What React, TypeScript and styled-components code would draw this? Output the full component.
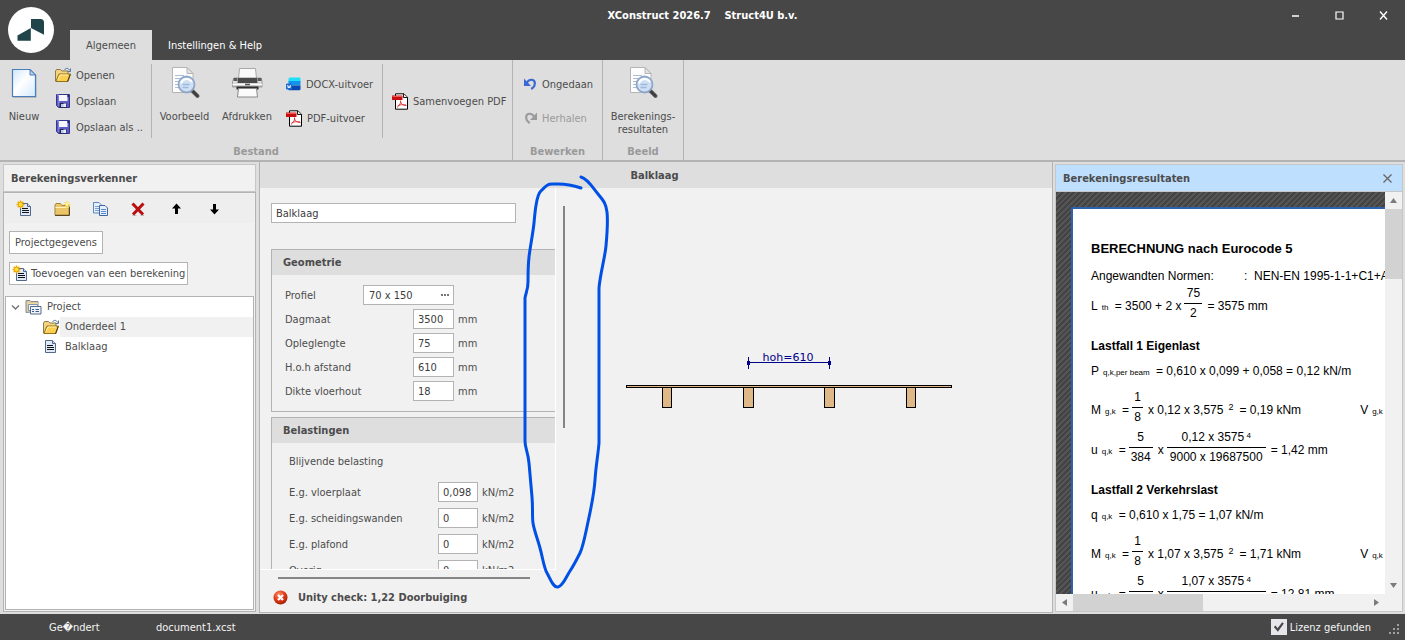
import React from 'react';
import styled, { createGlobalStyle, css } from 'styled-components';

const ui = '"DejaVu Sans Condensed", "DejaVu Sans", Tahoma, sans-serif';
const c = {
  dark: '#474747',
  ribbon: '#dedede',
  panel: '#f1f1f1',
  line: '#b3b3b3',
  text: '#4c4c4c',
  muted: '#9a9a9a',
};

const GlobalStyle = createGlobalStyle`
  * { box-sizing: border-box; }
  body { margin: 0; background: ${c.ribbon}; font-family: ${ui}; font-size: 11px; color: ${c.text}; }
  button, input { font-family: inherit; font-size: inherit; color: inherit; }
  button { border: 0; background: none; padding: 0; cursor: pointer; }
  h1, h2, h3, p { margin: 0; font-size: inherit; }
  svg { display: block; flex: none; }
`;

/* ---------- window frame ---------- */

const Window = styled.div`
  position: relative;
  display: flex;
  flex-direction: column;
  height: 100vh;
  overflow: hidden;
`;

const TitleBar = styled.header`
  display: grid;
  grid-template-columns: 1fr auto 1fr;
  height: 60px;
  flex: none;
  background: ${c.dark};
  color: #fff;
`;

const TitleLeft = styled.div`
  display: flex;
  align-items: flex-end;
  padding-left: 8px;
`;

const Logo = styled.svg`
  margin: 0 16px 7px 0;
`;

const Tab = styled.button<{ $active?: boolean }>`
  height: 30px;
  padding: 0 16px;
  white-space: nowrap;
  color: ${p => (p.$active ? c.text : '#fff')};
  background: ${p => (p.$active ? c.ribbon : 'transparent')};
`;

const Caption = styled.h1`
  padding-top: 9px;
  line-height: 14px;
  white-space: pre;
`;

const WindowButtons = styled.div`
  display: flex;
  justify-content: flex-end;
  height: 30px;
`;

const WindowButton = styled.button`
  display: flex;
  align-items: center;
  justify-content: center;
  width: 44px;
`;

/* ---------- ribbon ---------- */

const Ribbon = styled.div`
  display: flex;
  flex: none;
  height: 102px;
  background: ${c.ribbon};
  border-bottom: 2px solid ${c.line};
`;

const Group = styled.section`
  display: flex;
  flex-direction: column;
  border-right: 1px solid ${c.line};
`;

const GroupBody = styled.div`
  display: flex;
  height: 83px;
`;

const GroupName = styled.h2`
  line-height: 17px;
  text-align: center;
  color: ${c.muted};
`;

const Divider = styled.div`
  width: 1px;
  margin: 4px 0 5px;
  background: ${c.line};
`;

const BigButton = styled.button<{ $w: number }>`
  display: flex;
  flex-direction: column;
  align-items: center;
  width: ${p => p.$w}px;
  padding-top: 6px;
  line-height: 13px;
  svg { margin-bottom: 12px; }
`;

const Stack = styled.div<{ $w: number; $row: number; $left: number; $top: number }>`
  display: flex;
  flex-direction: column;
  width: ${p => p.$w}px;
  padding: ${p => p.$top}px 0 0 ${p => p.$left}px;
  button { height: ${p => p.$row}px; }
`;

const SmallButton = styled.button`
  display: flex;
  align-items: center;
  gap: 4px;
  white-space: nowrap;
  &:disabled { color: ${c.muted}; }
`;

/* ---------- work area ---------- */

const Main = styled.main`
  display: grid;
  grid-template-columns: 257px minmax(0, 1fr) 350px;
  column-gap: 2px;
  flex: 1;
  min-height: 0;
  padding-bottom: 1px;
`;

const PanelTitle = styled.h2<{ $active?: boolean }>`
  display: flex;
  align-items: center;
  justify-content: space-between;
  flex: none;
  height: 28px;
  padding: 0 10px 0 7px;
  border: 1px solid #c6c6c6;
  background: ${p => (p.$active ? '#bfdfff' : c.panel)};
`;

const Explorer = styled.aside`
  display: flex;
  flex-direction: column;
  margin: 2px 1px 1px 3px;
`;

const ExplorerBody = styled.div`
  display: flex;
  flex-direction: column;
  align-items: flex-start;
  flex: 1;
  min-height: 0;
  padding: 1px;
  border: 1px solid ${c.line};
  background: ${c.panel};
`;

const Toolbar = styled.div`
  display: flex;
  align-items: center;
  width: 100%;
  height: 29px;
  background: #eee;
`;

const ToolButton = styled.button`
  display: flex;
  align-items: center;
  justify-content: center;
  width: 38px;
  height: 28px;
`;

const BoxButton = styled.button<{ $pad: number }>`
  display: flex;
  align-items: center;
  gap: 2px;
  height: 23px;
  margin: 8px 0 0 4px;
  padding: 0 ${p => p.$pad}px;
  border: 1px solid ${c.line};
  background: #fff;
  white-space: nowrap;
`;

const Tree = styled.ul`
  align-self: stretch;
  flex: 1;
  min-height: 0;
  margin: 11px 0 0;
  padding: 0;
  border: 1px solid ${c.line};
  background: #fff;
  list-style: none;
`;

const TreeItem = styled.li<{ $depth: number }>`
  display: flex;
  align-items: center;
  height: 20px;
  padding-left: ${p => (p.$depth ? 37 : 5)}px;
`;

const TreeLabel = styled.span<{ $selected?: boolean }>`
  flex: 1;
  padding-left: 5px;
  line-height: 20px;
  background: ${p => (p.$selected ? c.panel : 'transparent')};
`;

const Chevron = styled.svg`
  margin-right: 5px;
`;

const Editor = styled.section`
  display: flex;
  flex-direction: column;
  min-width: 0;
  min-height: 0;
  border: solid ${c.line};
  border-width: 0 1px 1px;
  background: ${c.panel};
`;

const EditorTitle = styled.h2`
  flex: none;
  height: 26px;
  padding: 1px 3px 0 0;
  line-height: 25px;
  text-align: center;
  background: ${c.ribbon};
`;

const EditorBody = styled.div`
  display: grid;
  grid-template-columns: 310px minmax(0, 1fr);
  flex: 1;
  min-height: 0;
`;

const FormPane = styled.div`
  display: grid;
  grid-template-columns: 296px 14px;
  grid-template-rows: minmax(0, 1fr) 15px 27px;
  min-height: 0;
`;

const FormView = styled.form`
  overflow: hidden;
  padding: 15px 0 0 11px;
  border: solid #fff;
  border-width: 0 1px 1px 0;
`;

const VTrack = styled.div`
  padding: 18px 0 142px 7px;
`;

const HTrack = styled.div`
  grid-column: 1 / -1;
  padding: 7px 40px 0 18px;
`;

const Thumb = styled.div<{ $vertical?: boolean }>`
  background: #858585;
  ${p => (p.$vertical ? css`width: 2px; height: 100%;` : css`width: 100%; height: 2px;`)}
`;

const Unity = styled.p`
  display: flex;
  align-items: center;
  grid-column: 1 / -1;
  gap: 10px;
  padding: 0 0 2px 13px;
  font-weight: bold;
`;

const Field = styled.input<{ $w: number }>`
  width: ${p => p.$w}px;
  height: 20px;
  padding: 0 4px;
  border: 1px solid ${c.line};
  border-radius: 0;
  background: #fff;
  color: #3c3c3c;
  outline: none;
`;

const Section = styled.fieldset<{ $gap: number }>`
  width: 320px;
  margin: ${p => p.$gap}px 0 0;
  padding: 0 0 8px;
  border: 1px solid ${c.line};
`;

const SectionTitle = styled.h3`
  height: 25px;
  padding-left: 11px;
  line-height: 25px;
  background: ${c.ribbon};
`;

const Rows = styled.div<{ $left: number; $top: number; $row: number; $label: number }>`
  padding: ${p => p.$top}px 0 0 ${p => p.$left}px;
  > div {
    display: flex;
    align-items: center;
    height: ${p => p.$row}px;
  }
  label { width: ${p => p.$label}px; }
`;

const FieldSlot = styled.div`
  display: flex;
  justify-content: flex-end;
  width: 91px;
`;

const Picker = styled.div`
  display: flex;
  align-items: center;
  width: 91px;
  height: 20px;
  border: 1px solid ${c.line};
  background: #fff;
  input { border: 0; height: 18px; padding-left: 5px; }
`;

const Dots = styled.button`
  display: flex;
  gap: 1px;
  margin-left: 3px;
  i { width: 2px; height: 2px; background: #777; }
`;

const Unit = styled.span`
  margin-left: 4px;
`;

const SubTitle = styled.p`
  padding-left: 17px;
  margin: 6px 0 0;
  line-height: 26px;
`;

const Canvas = styled.div`
  min-width: 0;
  padding: 160px 0 0 55px;
  overflow: hidden;
`;

/* ---------- results ---------- */

const Results = styled.aside`
  display: flex;
  flex-direction: column;
  min-height: 0;
  min-width: 0;
  margin: 2px 2px 1px 0;
`;

const CloseButton = styled.button`
  display: flex;
`;

const Viewer = styled.div`
  display: grid;
  grid-template-columns: minmax(0, 1fr) 17px;
  grid-template-rows: minmax(0, 1fr) 17px;
  flex: 1;
  min-height: 0;
  border: 1px solid #c6c6c6;
  border-top: 0;
  background: ${c.panel};
`;

const Backdrop = styled.div`
  overflow: hidden;
  padding: 15px 0 0 15px;
  background: repeating-linear-gradient(135deg, #434343 0 2px, #555 2px 4px);
`;

const Paper = styled.article`
  width: 700px;
  padding: 30px 0 0 18px;
  border: 2px solid #2a62ad;
  background: #fff;
  color: #000;
  font: 12px/20px "Liberation Sans", Arial, sans-serif;
  white-space: pre;
`;

const PaperTitle = styled.h2`
  font-size: 13px;
`;

const Norms = styled.p`
  display: flex;
  margin-top: 7px;
  span:first-child { width: 153px; }
`;

const LoadCase = styled.h3`
  margin: 10px 0 5px;
`;

const Formula = styled.p<{ $gap?: number; $tall?: boolean }>`
  display: flex;
  height: ${p => (p.$tall ? 40 : 20)}px;
  margin-top: ${p => p.$gap ?? 0}px;
  line-height: ${p => (p.$tall ? 40 : 20)}px;
`;

const Sub = styled.small<{ $w?: number }>`
  width: ${p => (p.$w ? `${p.$w}px` : 'auto')};
  padding: 2px 0 0 4px;
  font-size: 8px;
`;

const Power = styled.small`
  margin-top: -3px;
  padding: 0 6px 0 5px;
  font-size: 9px;
`;

const Fraction = styled.span<{ $w: number }>`
  display: flex;
  flex-direction: column;
  width: ${p => p.$w}px;
  margin: 0 5px 0 3px;
  text-align: center;
  line-height: 18px;
`;

const Numerator = styled.span`
  height: 18px;
  border-bottom: 1px solid #000;
  line-height: 14px;
  small { font-size: 8px; vertical-align: 3px; line-height: 1; }
`;

const Far = styled.span`
  margin-left: 59px;
`;

const ScrollBar = styled.div<{ $horizontal?: boolean }>`
  display: flex;
  flex-direction: ${p => (p.$horizontal ? 'row' : 'column')};
  justify-content: space-between;
`;

const ScrollArrow = styled.button`
  display: flex;
  align-items: center;
  justify-content: center;
  flex: none;
  width: 17px;
  height: 17px;
`;

const ScrollSpace = styled.div<{ $horizontal?: boolean }>`
  flex: 1;
  div {
    background: #d2d2d2;
    ${p => (p.$horizontal ? css`width: 44%; height: 17px;` : css`height: 70px; width: 17px;`)}
  }
`;

/* ---------- status bar ---------- */

const StatusBar = styled.footer`
  display: flex;
  align-items: center;
  flex: none;
  height: 26px;
  padding: 0 4px 0 49px;
  background: ${c.dark};
  color: #f4f4f4;
`;

const StatusText = styled.span<{ $w?: number }>`
  width: ${p => (p.$w ? `${p.$w}px` : 'auto')};
`;

const License = styled.label`
  display: flex;
  align-items: center;
  gap: 3px;
  margin-left: auto;
`;

const Check = styled.input`
  appearance: none;
  display: grid;
  place-items: center;
  width: 16px;
  height: 16px;
  margin: 0;
  background: #e6e6ea;
  &:checked::before {
    content: '';
    width: 10px;
    height: 10px;
    background: ${c.dark};
    clip-path: polygon(0 50%, 18% 36%, 38% 62%, 84% 2%, 100% 14%, 42% 98%);
  }
`;

const Grip = styled.svg`
  margin: 6px 0 0 18px;
`;

const Ink = styled.svg`
  position: absolute;
  left: 0;
  top: 0;
  pointer-events: none;
`;

/* ---------- icons ---------- */

const NewIcon = () => (
  <svg width="28" height="32" viewBox="0 0 28 32">
    <defs>
      <linearGradient id="sheet" x1="0" y1="0" x2="1" y2="1">
        <stop offset="0" stopColor="#cfe6fb" /><stop offset=".45" stopColor="#fff" /><stop offset="1" stopColor="#d3e9fc" />
      </linearGradient>
    </defs>
    <path d="M3 4h18l5.500 5.500V32H3z" fill="#000" opacity=".18" />
    <path d="M2.500 3.500H20L25.500 9v21.500h-23z" fill="url(#sheet)" stroke="#4a7ebb" strokeWidth="1.200" />
    <path d="M20 3.500V9h5.500z" fill="#b5d3f0" stroke="#4a7ebb" />
  </svg>
);

const PreviewIcon = () => (
  <svg width="32" height="32" viewBox="0 0 32 32">
    <path d="M3.500 1.500H18l6 6v19H3.500z" fill="#fdfdfd" stroke="#b4b4b4" />
    <path d="M18 1.500v6h6z" fill="#e4e4e4" stroke="#b4b4b4" />
    <path d="M6 9.500h9M6 12.500h9M6 15.500h5M6 18.500h5M6 21.500h6" stroke="#a9bdd4" />
    <path d="M22.500 24l6 6" stroke="#777" strokeWidth="4" strokeLinecap="round" />
    <path d="M23 24.500l5.500 5.500" stroke="#3d3d3d" strokeWidth="2.500" strokeLinecap="round" />
    <circle cx="17.500" cy="18.500" r="8" fill="#cfe0f5" stroke="#8ea6c8" strokeWidth="1.800" />
    <path d="M12 17.500a6 6 0 0 1 11-1.500" fill="none" stroke="#fff" strokeWidth="2" />
    <path d="M13.500 18.500h7M13.500 21.500h6" stroke="#9db8dd" strokeWidth="1.400" />
  </svg>
);

const PrinterIcon = () => (
  <svg width="32" height="32" viewBox="0 0 32 32">
    <defs>
      <linearGradient id="steel" x1="0" y1="0" x2="0" y2="1">
        <stop offset="0" stopColor="#fafafa" /><stop offset="1" stopColor="#b4b4b4" />
      </linearGradient>
    </defs>
    <path d="M8.500 2.500h16l1 10H7.500z" fill="#fafafa" stroke="#a8a8a8" />
    <path d="M3 12h27l1 3.500V21H1.500v-5.500z" fill="url(#steel)" stroke="#9a9a9a" />
    <path d="M2.500 12h4v3h-4zM26.500 12h4v3h-4z" fill="#5a5a5a" />
    <path d="M7 12h19l.5 5H6.500z" fill="#4a4a4a" />
    <path d="M1.500 18.500h29.500" stroke="#fff" strokeWidth="1.500" />
    <path d="M14 18.500h5" stroke="#555" strokeWidth="1.500" />
    <path d="M5.500 20.500h22v3h-22z" fill="#2e2e2e" />
    <path d="M7.500 22.500h18l1 8.500H6.500z" fill="#fbfbfb" stroke="#8a8a8a" />
  </svg>
);

const OpenFolder = () => (
  <svg width="17" height="16" viewBox="0 0 17 16">
    <path d="M.5 14V4l1-1.500h4l1.500 1.500h6v3" fill="#f3d37b" stroke="#8a7b55" />
    <path d="M.8 14.500l3.200-7.500h11.500L13 14.500z" fill="#fbd050" stroke="#92701c" />
    <path d="M3 12.500l2-4.500h8" fill="none" stroke="#fff0b0" />
    <path d="M12.500 14.500l2.700-7.200" stroke="#4b3a10" />
    <path d="M9.500 3c1.500-2.500 4-2 5.200.5M15.500 1.500v3h-3" fill="none" stroke="#56749e" />
  </svg>
);

const SaveIcon = () => (
  <svg width="17" height="16" viewBox="0 0 17 16">
    <path d="M1.500 1.500h13v13h-11l-2-2z" fill="#5c5cc8" stroke="#34348e" />
    <path d="M2 2h2v11" stroke="#9c9cf0" fill="none" />
    <path d="M4 2h8.500v6H4z" fill="#f5f7fc" />
    <path d="M12.500 2h1.500v2h-1.500z" fill="#222266" />
    <path d="M4.500 10h7v4.500h-7z" fill="#26264e" />
    <path d="M6 11h3v3H6z" fill="#b8c8e8" /><path d="M8.500 10.500h2.500v3.500H8.500z" fill="#e8eefa" />
  </svg>
);

const DocxIcon = () => (
  <svg width="16" height="16" viewBox="0 0 16 16">
    <path d="M4 1.500h9.500a1 1 0 0 1 1 1V6h-12V3a1.500 1.500 0 0 1 1.500-1.500z" fill="#1fe0fa" />
    <path d="M2.500 5h12v4.500h-12z" fill="#1593ea" />
    <path d="M2.500 9.500h12V13a1.300 1.300 0 0 1-1.300 1.300H2.500z" fill="#0a49b4" />
    <rect x="0" y="7.500" width="6" height="6" rx="1" fill="#1d6cd2" />
    <path d="M1.500 9l.8 3 .8-2.200.8 2.200.8-3" fill="none" stroke="#fff" strokeWidth=".8" />
  </svg>
);

const PdfIcon = () => (
  <svg width="17" height="17" viewBox="0 0 17 17">
    <path d="M3.500.8h8.500l3.500 3.500v11.900h-12z" fill="#fff" stroke="#000" />
    <path d="M11.500 1v3.500h4" fill="#eee" stroke="#000" strokeWidth=".9" />
    <path d="M0 2.500h10.500V7H0z" fill="#c80f10" /><path d="M.5 3h9.500v1H.5z" fill="#ee5a50" />
    <path d="M8.500 7.500c.8 2-1 5-3.500 7M8.500 8.500c.5 2.500 2.500 4 6 4M5.500 13c2-1.500 5-1.500 8.500-1" fill="none" stroke="#e02c2c" strokeWidth=".9" />
  </svg>
);

const UndoIcon = ({ redo }: { redo?: boolean }) => (
  <svg width="15" height="14" viewBox="0 0 15 14">
    <g transform={redo ? 'matrix(-1 0 0 1 15 0)' : undefined}>
      <path d="M3.500 6C6 2 11 1.500 11.800 5.500c.4 2.500-1 4.800-3.600 6.500" fill="none" stroke={redo ? '#9b9b9b' : '#3a68d4'} strokeWidth="2.200" />
      <path d="M1 1.500v7.500h7z" fill={redo ? '#9b9b9b' : '#3a68d4'} />
    </g>
  </svg>
);

const Spark = () => (
  <g>
    <path d="M4.500.5v8M.5 4.500h8M1.700 1.700l5.600 5.600M7.300 1.700L1.700 7.300" stroke="#f0a800" strokeWidth="1.500" />
    <circle cx="4.500" cy="4.500" r="2.300" fill="#ffe23c" stroke="#e89a00" strokeWidth=".8" />
  </g>
);

const DocShape = () => (
  <g>
    <path d="M4.500 3.500h7l3 3v9h-10z" fill="#dfe9f7" stroke="#53698c" />
    <path d="M11.500 3.500v3h3" fill="#c9d7ea" stroke="#53698c" />
    <path d="M6 8.500h6M6 10.500h7M6 12.500h7" stroke="#111" />
  </g>
);

const NewDocIcon = () => <svg width="17" height="17" viewBox="0 0 17 17"><DocShape /><Spark /></svg>;
const DocIcon = () => <svg width="17" height="16" viewBox="2 2 17 16"><DocShape /></svg>;

const NewFolderIcon = () => (
  <svg width="17" height="16" viewBox="0 0 17 16">
    <path d="M1 14V4l1-1.500h4.500L8 4.500h7V14z" fill="#eac668" stroke="#a48443" />
    <path d="M1.500 6.500h13" stroke="#fff0bd" /><path d="M1 14.500h14.500V5.500" stroke="#5b4720" fill="none" />
    <path d="M13 0v7M9.500 3.500h7M10.500 1l5 5M15.500 1l-5 5" stroke="#ffd83b" />
    <circle cx="13" cy="3.500" r="1.500" fill="#fff6b0" />
  </svg>
);

const CopyIcon = () => (
  <svg width="17" height="16" viewBox="0 0 17 16">
    <path d="M1.500 1.500h5.500l2 2v8.500h-7.500z" fill="#e6f0fc" stroke="#5f86be" />
    <path d="M3 5.500h4M3 7.500h4M3 9.500h4" stroke="#7aa0d8" />
    <path d="M7.500 4.500H13l2.500 2.500v7.500h-8z" fill="#e6f0fc" stroke="#3d68a8" />
    <path d="M9 8.500h5M9 10.500h5M9 12.500h5" stroke="#5f8bcd" />
  </svg>
);

const DeleteIcon = () => (
  <svg width="16" height="16" viewBox="0 0 16 16">
    <path d="M2.500 2.500l10.500 11M13.500 2.500L3 13.500" stroke="#b90e0e" strokeWidth="3" />
    <path d="M2.500 14.500h4M10.500 14.500h3.500" stroke="#999" strokeWidth=".6" />
  </svg>
);

const ArrowIcon = ({ down }: { down?: boolean }) => (
  <svg width="11" height="12" viewBox="0 0 11 12">
    <path d="M5.500.5L10 5.500H7V11H4V5.500H1z" fill="#000" transform={down ? 'rotate(180 5.500 6)' : undefined} />
  </svg>
);

const ProjectIcon = () => (
  <svg width="17" height="15" viewBox="0 0 17 15">
    <path d="M1 12.500v-12h4l1 1h7v10z" fill="#d9ccae" stroke="#8b8b8b" />
    <path d="M2 3.500h11" stroke="#f3d995" />
    <path d="M3.500 4.500h9v6h-9z" fill="#f3f5f8" stroke="#8694aa" />
    <path d="M5.500 6.500h10.500v7.500H5.500z" fill="#eef3fa" stroke="#566a8a" />
    <path d="M7 9.500h2M10.500 9.500H14M7 11.500h2M10.500 11.500H14" stroke="#3c5a88" />
  </svg>
);

const ErrorIcon = () => (
  <svg width="15" height="15" viewBox="0 0 15 15">
    <defs>
      <radialGradient id="ball" cx=".4" cy=".3" r=".8">
        <stop offset="0" stopColor="#ff8d66" /><stop offset=".55" stopColor="#dc3412" /><stop offset="1" stopColor="#8c1d08" />
      </radialGradient>
    </defs>
    <circle cx="7.500" cy="7.500" r="7" fill="url(#ball)" />
    <path d="M5 5l5 5M10 5l-5 5" stroke="#fff" strokeWidth="2.200" />
  </svg>
);

const Triangle = ({ turn }: { turn: number }) => (
  <svg width="9" height="9" viewBox="0 0 9 9">
    <path d="M1 7l3.500-5L8 7z" fill="#7b7b7b" transform={`rotate(${turn} 4.500 4.500)`} />
  </svg>
);

const FloorDrawing = () => (
  <svg width="328" height="64" viewBox="0 0 328 64" shapeRendering="crispEdges">
    <text x="163" y="13" textAnchor="middle" fontFamily={'"DejaVu Sans", sans-serif'} fontSize="11" fill="#00008b">hoh=610</text>
    <path d="M123 14.500h81M123.500 9v12M204.500 9v12" stroke="#00008b" />
    <path d="M122 13h3v4h-3zM203 13h3v4h-3z" fill="#00008b" />
    <g fill="#deb887" stroke="#000">
      <path d="M37.500 39.500h9v20h-9zM118.500 39.500h10v20h-10zM199.500 39.500h10v20h-10zM281.500 39.500h9v20h-9z" />
      <path d="M1.500 37.500h325v2h-325z" />
    </g>
  </svg>
);

/* ---------- pieces ---------- */

const geometry = [
  ['Dagmaat', '3500'],
  ['Opleglengte', '75'],
  ['H.o.h afstand', '610'],
  ['Dikte vloerhout', '18'],
];

const loads = [
  ['E.g. vloerplaat', '0,098'],
  ['E.g. scheidingswanden', '0'],
  ['E.g. plafond', '0'],
  ['Overig', '0'],
];

const Frac = ({ w, top, power, bottom }: { w: number; top: string; power?: string; bottom: string }) => (
  <Fraction $w={w}>
    <Numerator>{top}{power && <small> {power}</small>}</Numerator>
    <span>{bottom}</span>
  </Fraction>
);

const Moment = ({ load, sub, result }: { load: string; sub: string; result: string }) => (
  <Formula $tall $gap={9}>
    M<Sub $w={21}>{sub}</Sub>=<Frac w={11} top="1" bottom="8" />
    {`x ${load} x 3,575`}<Power>2</Power>{`= ${result} kNm`}
    <Far>V</Far><Sub>{sub}</Sub>
  </Formula>
);

const Deflection = ({ load, sub, result }: { load: string; sub: string; result: string }) => (
  <Formula $tall>
    u<Sub $w={21}>{sub}</Sub>=<Frac w={24} top="5" bottom="384" />x
    <Frac w={99} top={`${load} x 3575`} power="4" bottom="9000 x 19687500" />{`= ${result} mm`}
  </Formula>
);

export default function App() {
  return (
    <Window>
      <GlobalStyle />
      <TitleBar>
        <TitleLeft>
          <Logo width="46" height="46" viewBox="8 7 46 46">
            <circle cx="31" cy="30" r="23" fill="#fff" />
            <path d="M17.500 35.500L30.800 28v12.700H17.500z" fill="#20444a" />
            <path d="M31 19h9.500q3.500 0 3.500 3.500v12.200L31 28z" fill="#20444a" />
          </Logo>
          <Tab $active>Algemeen</Tab>
          <Tab>Instellingen &amp; Help</Tab>
        </TitleLeft>
        <Caption>{'XConstruct 2026.7    Struct4U b.v.'}</Caption>
        <WindowButtons>
          <WindowButton aria-label="Minimaliseren"><svg width="9" height="9"><path d="M1 5h7" stroke="#fff" strokeWidth="1.500" /></svg></WindowButton>
          <WindowButton aria-label="Maximaliseren"><svg width="9" height="9"><path d="M1 1h7v7H1z" fill="none" stroke="#fff" strokeWidth="1.200" /></svg></WindowButton>
          <WindowButton aria-label="Sluiten"><svg width="9" height="9"><path d="M1 .5l7 8M8 .5l-7 8" stroke="#fff" strokeWidth="1.400" /></svg></WindowButton>
        </WindowButtons>
      </TitleBar>

      <Ribbon>
        <Group>
          <GroupBody>
            <BigButton $w={48}><NewIcon />Nieuw</BigButton>
            <Stack $w={103} $row={26} $left={7} $top={2}>
              <SmallButton><OpenFolder />Openen</SmallButton>
              <SmallButton><SaveIcon />Opslaan</SmallButton>
              <SmallButton><SaveIcon />Opslaan als ..</SmallButton>
            </Stack>
            <Divider />
            <BigButton $w={65}><PreviewIcon />Voorbeeld</BigButton>
            <BigButton $w={60}><PrinterIcon />Afdrukken</BigButton>
            <Stack $w={105} $row={34} $left={9} $top={7}>
              <SmallButton><DocxIcon />DOCX-uitvoer</SmallButton>
              <SmallButton><PdfIcon />PDF-uitvoer</SmallButton>
            </Stack>
            <Divider />
            <Stack $w={129} $row={34} $left={9} $top={24}>
              <SmallButton><PdfIcon />Samenvoegen PDF</SmallButton>
            </Stack>
          </GroupBody>
          <GroupName>Bestand</GroupName>
        </Group>
        <Group>
          <GroupBody>
            <Stack $w={89} $row={34} $left={10} $top={7}>
              <SmallButton><UndoIcon />Ongedaan</SmallButton>
              <SmallButton disabled><UndoIcon redo />Herhalen</SmallButton>
            </Stack>
          </GroupBody>
          <GroupName>Bewerken</GroupName>
        </Group>
        <Group>
          <GroupBody>
            <BigButton $w={80}><PreviewIcon /><span>Berekenings-<br />resultaten</span></BigButton>
          </GroupBody>
          <GroupName>Beeld</GroupName>
        </Group>
      </Ribbon>

      <Main>
        <Explorer>
          <PanelTitle>Berekeningsverkenner</PanelTitle>
          <ExplorerBody>
            <Toolbar>
              <ToolButton aria-label="Nieuwe berekening"><NewDocIcon /></ToolButton>
              <ToolButton aria-label="Nieuwe map"><NewFolderIcon /></ToolButton>
              <ToolButton aria-label="Kopiëren"><CopyIcon /></ToolButton>
              <ToolButton aria-label="Verwijderen"><DeleteIcon /></ToolButton>
              <ToolButton aria-label="Omhoog"><ArrowIcon /></ToolButton>
              <ToolButton aria-label="Omlaag"><ArrowIcon down /></ToolButton>
            </Toolbar>
            <BoxButton $pad={5}>Projectgegevens</BoxButton>
            <BoxButton $pad={2}><NewDocIcon />Toevoegen van een berekening</BoxButton>
            <Tree>
              <TreeItem $depth={0}>
                <Chevron width="9" height="8"><path d="M1 2.500l3.500 3.500L8 2.500" fill="none" stroke="#777" strokeWidth="1.500" /></Chevron>
                <ProjectIcon /><TreeLabel>Project</TreeLabel>
              </TreeItem>
              <TreeItem $depth={1}><OpenFolder /><TreeLabel $selected>Onderdeel 1</TreeLabel></TreeItem>
              <TreeItem $depth={1}><DocIcon /><TreeLabel>Balklaag</TreeLabel></TreeItem>
            </Tree>
          </ExplorerBody>
        </Explorer>

        <Editor>
          <EditorTitle>Balklaag</EditorTitle>
          <EditorBody>
            <FormPane>
              <FormView>
                <Field $w={245} defaultValue="Balklaag" aria-label="Naam" />
                <Section $gap={26}>
                  <SectionTitle>Geometrie</SectionTitle>
                  <Rows $left={13} $top={8} $row={24} $label={78}>
                    <div>
                      <label htmlFor="profiel">Profiel</label>
                      <Picker>
                        <Field $w={74} id="profiel" defaultValue="70 x 150" />
                        <Dots type="button" aria-label="Kies profiel"><i /><i /><i /></Dots>
                      </Picker>
                    </div>
                    {geometry.map(([name, value]) => (
                      <div key={name}>
                        <label htmlFor={name}>{name}</label>
                        <FieldSlot><Field $w={41} id={name} defaultValue={value} /></FieldSlot>
                        <Unit>mm</Unit>
                      </div>
                    ))}
                  </Rows>
                </Section>
                <Section $gap={5}>
                  <SectionTitle>Belastingen</SectionTitle>
                  <SubTitle>Blijvende belasting</SubTitle>
                  <Rows $left={17} $top={4} $row={26} $label={149}>
                    {loads.map(([name, value]) => (
                      <div key={name}>
                        <label htmlFor={name}>{name}</label>
                        <Field $w={40} id={name} defaultValue={value} />
                        <Unit>kN/m2</Unit>
                      </div>
                    ))}
                  </Rows>
                </Section>
              </FormView>
              <VTrack><Thumb $vertical /></VTrack>
              <HTrack><Thumb /></HTrack>
              <Unity><ErrorIcon />Unity check: 1,22 Doorbuiging</Unity>
            </FormPane>
            <Canvas><FloorDrawing /></Canvas>
          </EditorBody>
        </Editor>

        <Results>
          <PanelTitle $active>
            Berekeningsresultaten
            <CloseButton aria-label="Sluiten"><svg width="9" height="9"><path d="M.5.5l8 8M8.500.5l-8 8" stroke="#666" strokeWidth="1.300" /></svg></CloseButton>
          </PanelTitle>
          <Viewer>
            <Backdrop>
              <Paper>
                <PaperTitle>BERECHNUNG nach Eurocode 5</PaperTitle>
                <Norms><span>Angewandten Normen:</span><span>{':  NEN-EN 1995-1-1+C1+A1'}</span></Norms>
                <Formula $tall>
                  L<Sub $w={17}>th</Sub>= 3500 + 2 x<Frac w={18} top="75" bottom="2" />= 3575 mm
                </Formula>
                <LoadCase>Lastfall 1 Eigenlast</LoadCase>
                <Formula>P<Sub $w={57}>q,k,per beam</Sub>= 0,610 x 0,099 + 0,058 = 0,12 kN/m</Formula>
                <Moment load="0,12" sub="g,k" result="0,19" />
                <Deflection load="0,12" sub="q,k" result="1,42" />
                <LoadCase>Lastfall 2 Verkehrslast</LoadCase>
                <Formula>q<Sub $w={21}>q,k</Sub>= 0,610 x 1,75 = 1,07 kN/m</Formula>
                <Moment load="1,07" sub="q,k" result="1,71" />
                <Deflection load="1,07" sub="q,k" result="12,81" />
              </Paper>
            </Backdrop>
            <ScrollBar>
              <ScrollArrow aria-label="Omhoog schuiven"><Triangle turn={0} /></ScrollArrow>
              <ScrollSpace><div /></ScrollSpace>
              <ScrollArrow aria-label="Omlaag schuiven"><Triangle turn={180} /></ScrollArrow>
            </ScrollBar>
            <ScrollBar $horizontal>
              <ScrollArrow aria-label="Naar links schuiven"><Triangle turn={-90} /></ScrollArrow>
              <ScrollSpace $horizontal><div /></ScrollSpace>
              <ScrollArrow aria-label="Naar rechts schuiven"><Triangle turn={90} /></ScrollArrow>
            </ScrollBar>
          </Viewer>
        </Results>
      </Main>

      <StatusBar>
        <StatusText $w={107}>{'Ge\uFFFDndert'}</StatusText>
        <StatusText>document1.xcst</StatusText>
        <License><Check type="checkbox" defaultChecked />Lizenz gefunden</License>
        <Grip width="12" height="12" viewBox="0 0 12 12">
          <path d="M8 0h2v2H8zM8 4h2v2H8zM4 4h2v2H4zM8 8h2v2H8zM4 8h2v2H4zM0 8h2v2H0z" fill="#a0a0a0" />
        </Grip>
      </StatusBar>

      <Ink width="620" height="600" viewBox="0 0 620 600">
        <path
          d="M581 177C588 179 593 188 598 194S606 203 607 212 607 235 606 246 600 275 599 288V443C598 455 596 465 595 480S591 508 588 522 583 547 580 553 574 565 570 571 563 586 558 587 550 578 547 573 543 559 540 548 534 530 533 523 533 508 532 497 530 474 529 463 525 448 525 441V298C526 292 528 290 528 282S528 266 529 257 533 233 534 223 535 209 537 200 541 191 545 187 551 184 558 184 572 185 581 188"
          fill="none" stroke="#0050e6" strokeWidth="3" strokeLinecap="round" strokeLinejoin="round"
        />
      </Ink>
    </Window>
  );
}
